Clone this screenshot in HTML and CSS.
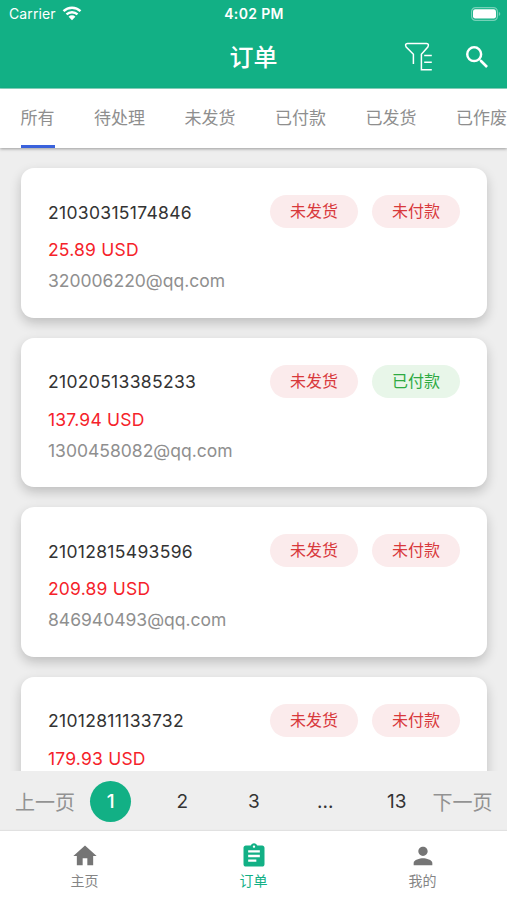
FILE: index.html
```html
<!doctype html>
<html lang="zh-CN">
<head>
    <meta charset="utf-8">
    <title>订单</title>
    <link rel="stylesheet" href="styles.css">
</head>
<body>
<div id="app">
    <header>
        <div class="status">
            <div class="carrier">
                <span>Carrier</span>
                <svg class="wifi" viewBox="0 0 20 15" width="20" height="15">
                    <path d="M1.5 5.2a12.2 12.2 0 0 1 17 0" />
                    <path d="M4.5 8.4a8 8 0 0 1 11 0" />
                    <path class="dot" d="M10 14.2l-3.4-3.5a4.8 4.8 0 0 1 6.8 0z" />
                </svg>
            </div>
            <div class="time">4:02 PM</div>
            <svg class="battery" viewBox="0 0 31 14" width="31" height="14">
                <rect class="shell" x="1.6" y=".6" width="25.8" height="12.8" rx="4" />
                <rect x="3" y="2.2" width="23" height="9.2" rx="2.2" />
                <path class="cap" d="M28.8 4.8q3 2.2 0 4.4z" />
            </svg>
        </div>
        <div class="titlebar">
            <h1>订单</h1>
            <div class="actions">
                <svg class="filter" viewBox="0 0 30 30" width="30" height="30">
                    <path d="M9.4 22v-9.8L2.2 5.1Q.5 1.800 3.400 1.600h19.200q2.900.2 1.200 3.500l-6.400 7.100v15.600h10.400M20.200 13.500h7.600M20.200 20.300h7.600" />
                </svg>
                <svg class="search" viewBox="3 3 17.5 17.5" width="22" height="22">
                    <path d="M15.5 14h-.79l-.28-.27A6.471 6.471 0 0 0 16 9.5 6.5 6.5 0 1 0 9.5 16c1.61 0 3.09-.59 4.23-1.57l.27.28v.79l5 4.99L20.49 19l-4.99-5zm-6 0C7.01 14 5 11.99 5 9.5S7.01 5 9.5 5 14 7.01 14 9.5 11.99 14 9.5 14z" />
                </svg>
            </div>
        </div>
    </header>

    <nav class="tabs">
        <span class="active">所有</span>
        <span>待处理</span>
        <span>未发货</span>
        <span>已付款</span>
        <span>已发货</span>
        <span>已作废</span>
    </nav>

    <main>
        <div class="card">
            <div class="top">
                <span class="number">21030315174846</span>
                <span class="pill">未发货</span>
                <span class="pill">未付款</span>
            </div>
            <div class="price">25.89 USD</div>
            <div class="email">320006220@qq.com</div>
        </div>
        <div class="card">
            <div class="top">
                <span class="number">21020513385233</span>
                <span class="pill">未发货</span>
                <span class="pill done">已付款</span>
            </div>
            <div class="price">137.94 USD</div>
            <div class="email">1300458082@qq.com</div>
        </div>
        <div class="card">
            <div class="top">
                <span class="number">21012815493596</span>
                <span class="pill">未发货</span>
                <span class="pill">未付款</span>
            </div>
            <div class="price">209.89 USD</div>
            <div class="email">846940493@qq.com</div>
        </div>
        <div class="card">
            <div class="top">
                <span class="number">21012811133732</span>
                <span class="pill">未发货</span>
                <span class="pill">未付款</span>
            </div>
            <div class="price">179.93 USD</div>
        </div>
    </main>

    <div class="pager">
        <span class="step">上一页</span>
        <span class="page"><b>1</b></span>
        <span class="page">2</span>
        <span class="page">3</span>
        <span class="page">...</span>
        <span class="page">13</span>
        <span class="step">下一页</span>
    </div>

    <footer>
        <div class="item">
            <svg viewBox="0 0 24 24" width="28" height="28"><path d="M10 20v-6h4v6h5v-8h3L12 3 2 12h3v8z" /></svg>
            <span>主页</span>
        </div>
        <div class="item active">
            <svg viewBox="0 0 24 24" width="28" height="28"><path d="M19 3h-4.18C14.4 1.84 13.3 1 12 1c-1.3 0-2.4.84-2.82 2H5c-1.1 0-2 .9-2 2v14c0 1.1.9 2 2 2h14c1.1 0 2-.9 2-2V5c0-1.1-.9-2-2-2zm-7 0c.55 0 1 .45 1 1s-.45 1-1 1-1-.45-1-1 .45-1 1-1zm2 14H7v-2h7v2zm3-4H7v-2h10v2zm0-4H7V7h10v2z" /></svg>
            <span>订单</span>
        </div>
        <div class="item">
            <svg viewBox="0 0 24 24" width="28" height="28"><path d="M12 12c2.21 0 4-1.79 4-4s-1.79-4-4-4-4 1.79-4 4 1.79 4 4 4zm0 2c-2.67 0-8 1.34-8 4v2h16v-2c0-2.66-5.33-4-8-4z" /></svg>
            <span>我的</span>
        </div>
    </footer>
</div>
</body>
</html>
```
FILE: styles.css
```css
html, body {
    height: 100%;
    margin: 0;
}
body {
    font-family: Inter, "Noto Sans CJK SC", sans-serif;
    background: #eeeeee;
    overflow: hidden;
}
#app {
    height: 100%;
    display: flex;
    flex-direction: column;
}
header {
    flex: none;
    height: 89px;
    background: #12b085;
    color: #fff;
    box-shadow: inset 0 -1px 0 #8bd9c4;
}
.status {
    height: 27px;
    padding: 0 6px 0 9px;
    display: grid;
    grid-template-columns: 1fr auto 1fr;
    align-items: center;
    font-size: 14px;
}
.carrier {
    display: flex;
    align-items: center;
    gap: 6px;
    letter-spacing: .1px;
}
.wifi path {
    fill: none;
    stroke: #fff;
    stroke-width: 2.4;
}
.wifi .dot {
    fill: #fff;
    stroke: none;
}
.time {
    margin-right: 2px;
    font-weight: 600;
    letter-spacing: .35px;
}
.battery {
    justify-self: end;
    fill: #fff;
}
.battery .shell {
    fill: none;
    stroke: #75d1b8;
    stroke-width: 1.2;
}
.battery .cap {
    fill: #75d1b8;
}
.titlebar {
    height: 60px;
    padding: 0 19px;
    display: grid;
    grid-template-columns: 1fr auto 1fr;
    align-items: center;
}
.titlebar h1 {
    grid-column: 2;
    margin: 0;
    font-size: 24px;
    font-weight: 500;
    line-height: 62px;
}
.actions {
    padding-bottom: 2px;
    display: flex;
    justify-content: flex-end;
    align-items: center;
    gap: 32px;
}
.filter {
    fill: none;
    stroke: #fff;
    stroke-width: 1.5;
}
.search {
    fill: #fff;
}
.tabs {
    flex: none;
    height: 59px;
    padding-left: 20.5px;
    display: flex;
    gap: 39.5px;
    background: #fff;
    color: #8e8e8e;
    font-size: 17px;
    line-height: 58px;
    white-space: nowrap;
    box-shadow: 0 1px 3px rgba(0, 0, 0, .35);
    z-index: 1;
}
.tabs span {
    flex: none;
    box-sizing: border-box;
    height: 59px;
}
.tabs .active {
    border-bottom: 3px solid #3a62dc;
}
main {
    flex: 1;
    min-height: 0;
    box-sizing: border-box;
    padding: 20px 20px 0 21px;
    display: flex;
    flex-direction: column;
    gap: 20px;
    overflow: hidden;
}
.card {
    flex: none;
    box-sizing: border-box;
    height: 149.5px;
    padding: 27px 27px 0;
    border-radius: 13px;
    background: #fff;
    box-shadow: 0 5px 12px rgba(0, 0, 0, .2);
    font-size: 17.5px;
}
.top {
    display: flex;
    align-items: center;
    gap: 14px;
}
.number {
    flex: 1;
    padding-top: 1px;
    color: #333;
    letter-spacing: .32px;
}
.pill {
    width: 88px;
    border-radius: 17px;
    background: #fbebec;
    color: #d8393c;
    font-size: 16px;
    line-height: 33px;
    text-align: center;
}
.pill.done {
    background: #e8f6e9;
    color: #2eaa42;
}
.price {
    margin-top: 6px;
    line-height: 31px;
    color: #f5222a;
    letter-spacing: .2px;
}
.email {
    line-height: 31px;
    color: #8f8f8f;
}
.pager {
    flex: none;
    height: 60px;
    padding: 0 14.5px 0 15px;
    display: flex;
    align-items: center;
    background: #eee;
    color: #333;
    font-size: 19px;
}
.step {
    color: #929292;
    font-size: 20px;
}
.page {
    flex: 1 1 0;
    display: flex;
    justify-content: center;
}
.page b {
    width: 41px;
    border-radius: 50%;
    background: #12b085;
    color: #fff;
    font-weight: 500;
    line-height: 41px;
    text-align: center;
}
footer {
    flex: none;
    height: 69px;
    display: flex;
    background: #fff;
    box-shadow: 0 -1px 1px rgba(0, 0, 0, .05);
}
.item {
    flex: 1;
    padding-top: 11px;
    display: flex;
    flex-direction: column;
    align-items: center;
    color: #757575;
    font-size: 14px;
    line-height: 22px;
}
.item span {
    color: #858585;
}
.item svg {
    fill: currentColor;
}
.item.active, .item.active span {
    color: #12b085;
}
```
